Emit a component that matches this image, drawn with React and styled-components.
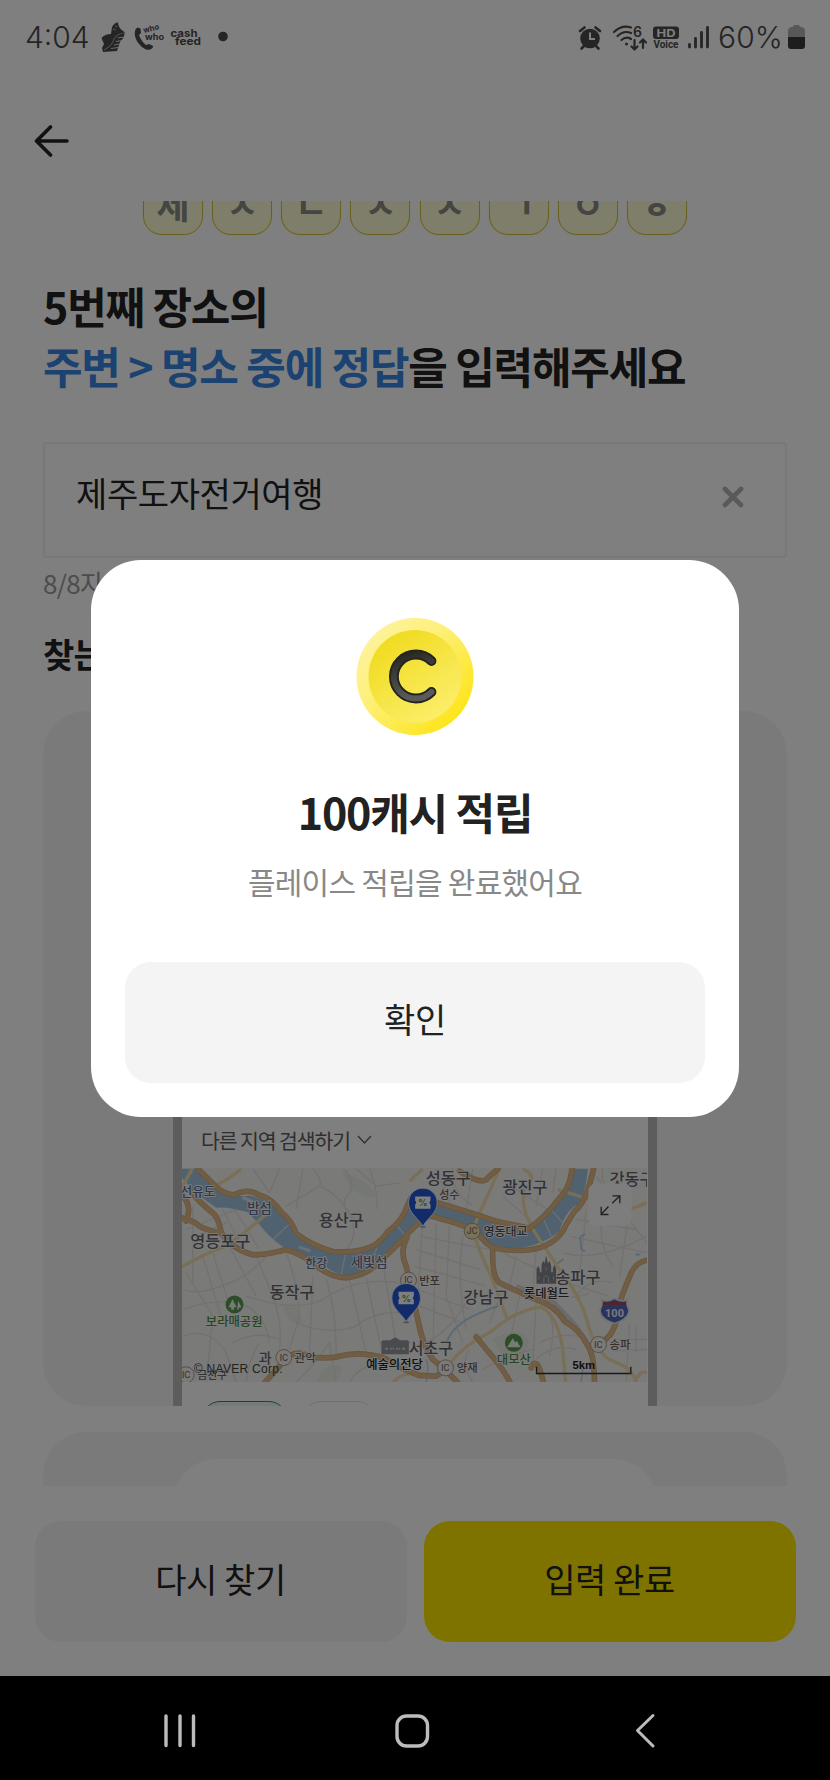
import React from "react";
import styled, { createGlobalStyle } from "styled-components";

const GlobalStyle = createGlobalStyle`
  * { box-sizing: border-box; }
  body { margin: 0; background: #000; }
  button { border: 0; margin: 0; padding: 0; font: inherit; color: inherit; }
`;

const Screen = styled.div`
  position: relative;
  display: flex;
  flex-direction: column;
  width: 830px;
  height: 1780px;
  overflow: hidden;
  background: #fff;
  color: #222;
  font-family: "Noto Sans CJK KR", sans-serif;
`;

/* ---------- status bar ---------- */

const StatusBar = styled.header`
  display: flex;
  justify-content: space-between;
  align-items: center;
  height: 73px;
  padding: 0 25px;
  color: #4a4a4a;
  font-family: Inter, sans-serif;
`;

const StatusGroup = styled.div`
  display: flex;
  align-items: center;
`;

const StatusText = styled.span`
  font-size: 30px;
  line-height: 36px;
  font-weight: 300;
  letter-spacing: ${(p) => p.$spacing || 0}px;
`;

const StatusIcon = styled.svg`
  display: block;
  width: ${(p) => p.$w}px;
  height: 34px;
  margin-left: ${(p) => p.$gap}px;
  overflow: visible;
`;

const TopBar = styled.div`
  display: flex;
  align-items: center;
  height: 128px;
  padding: 8px 0 0 34px;
  flex: none;

  svg { display: block; margin-bottom: 1px; }
`;

/* ---------- scrolled content ---------- */

const Content = styled.main`
  height: 1285px;
  flex: none;
  overflow: hidden;
  padding: 0 43px;
`;

const Hints = styled.div`
  display: flex;
  justify-content: center;
  gap: 9.1px;
  margin-top: -28px;
`;

const Hint = styled.span`
  width: 60px;
  height: 62px;
  border: 1.5px solid #d2be40;
  border-radius: 19px;
  background: #fffcd6;
  box-shadow: 0 0 2px #fff2a0;
  color: #8a8a86;
  font-size: 36px;
  font-weight: 700;
  line-height: 58px;
  text-align: center;
`;

const Question = styled.h1`
  margin: 40px 0 0;
  font-size: 43px;
  line-height: 60px;
  font-weight: 700;
  letter-spacing: -1.2px;
  white-space: nowrap;
`;

const Accent = styled.span`
  color: #3784e0;
`;

const AnswerField = styled.div`
  display: flex;
  align-items: center;
  justify-content: space-between;
  height: 116px;
  margin-top: 47px;
  padding: 0 41px 14px 31px;
  border: 2px solid #f0f0f0;
  border-radius: 4px;
  font-size: 34px;
  line-height: 50px;
  letter-spacing: -0.4px;

  svg { margin-top: 7px; }
`;

const Counter = styled.p`
  margin: 9px 0 0;
  font-size: 26px;
  line-height: 32px;
  letter-spacing: -0.7px;
  color: #999;
`;

const SectionTitle = styled.h2`
  margin: 31px 0 33px;
  font-size: 34px;
  line-height: 48px;
  letter-spacing: -0.8px;
`;

const GuideCard = styled.section`
  display: flex;
  justify-content: center;
  height: 695px;
  margin-bottom: 26px;
  padding-top: 27px;
  border-radius: 43px;
  background: #f5f5f5;
`;

const PhoneFrame = styled.div`
  display: flex;
  flex-direction: column;
  justify-content: flex-end;
  width: 484px;
  overflow: hidden;
  border: solid ${(p) => (p.$plain ? "#fff" : "#bababa")};
  border-width: 0 9.5px;
  border-radius: 44px 44px 0 0;
  background: #fff;
`;

const RegionRow = styled.div`
  display: flex;
  align-items: center;
  gap: 7px;
  height: 56px;
  padding: 0 0 0 19px;
  color: #5e5e5e;
  font-size: 20.5px;
  letter-spacing: -1.1px;
`;

const MapView = styled.svg`
  display: block;
  width: 465px;
  height: 214px;
  flex: none;
`;

const Pills = styled.div`
  display: flex;
  gap: 16px;
  height: 24px;
  padding: 19px 0 0 20px;
  overflow: hidden;
`;

const Pill = styled.span`
  flex: none;
  width: ${(p) => p.$w}px;
  height: 36px;
  border: 1.5px solid ${(p) => (p.$on ? "#2f8c50" : "#e2e2e2")};
  border-radius: 18px;
  background: ${(p) => (p.$on ? "#e9f8ee" : "#fff")};
`;

/* ---------- bottom actions and navigation ---------- */

const Actions = styled.footer`
  display: flex;
  gap: 17px;
  height: 190px;
  padding: 35px 34.5px;
  background: #fff;
`;

const ActionButton = styled.button`
  flex: 1;
  height: 120.5px;
  border-radius: 26px;
  background: ${(p) => (p.$primary ? "#ffe600" : "#f5f5f5")};
  font-size: 34px;
  line-height: 50px;
  letter-spacing: -0.4px;
  padding-bottom: 4px;
`;

const NavBar = styled.nav`
  display: flex;
  align-items: center;
  height: 104px;
  background: #000;

  svg { display: block; width: 830px; height: 104px; }
`;

/* ---------- reward dialog ---------- */

const Scrim = styled.div`
  position: absolute;
  inset: 0 0 104px;
  display: flex;
  align-items: center;
  justify-content: center;
  background: rgba(0, 0, 0, 0.5);
`;

const Dialog = styled.div`
  display: flex;
  flex-direction: column;
  align-items: center;
  width: 648px;
  height: 557px;
  padding: 54px 34px 34px;
  border-radius: 50px;
  background: #fff;
`;

const Coin = styled.svg`
  display: block;
  width: 124px;
  height: 124px;
  overflow: visible;
`;

const DialogTitle = styled.h3`
  margin: 43px 0 0;
  font-size: 43px;
  line-height: 60px;
  letter-spacing: -1.2px;
`;

const DialogText = styled.p`
  margin: 18px 0 0;
  font-size: 30px;
  line-height: 44px;
  letter-spacing: -0.75px;
  color: #888;
`;

const ConfirmButton = styled(ActionButton)`
  flex: none;
  width: 580px;
  height: 121px;
  margin-top: auto;
  padding-bottom: 6px;
  background: #f4f4f4;
`;

/* ---------- map pieces ---------- */

const HIGHWAYS = [
  "M85 178L140 232Q165 255 195 256Q235 236 265 255Q310 268 335 308Q365 330 380 372Q430 410 490 426Q560 432 610 410Q640 392 655 366Q700 335 715 285Q740 220 800 278L910 312L980 335L1080 356Q1130 320 1170 265Q1200 240 1208 178",
  "M60 240Q85 275 135 315Q150 335 155 370Q190 420 250 436Q300 435 350 420Q400 435 435 465Q480 503 530 505Q590 498 625 462L700 390Q740 340 780 318L850 338L918 362Q950 410 980 417Q1060 430 1110 415Q1170 395 1190 345L1215 305Q1250 280 1272 178",
  "M37 325Q75 335 90 350Q120 365 155 370",
  "M37 255Q70 290 50 335",
  "M970 415Q966 500 990 520Q1040 545 1100 570Q1160 590 1185 635Q1230 660 1250 700Q1275 730 1275 820",
  "M285 820L330 770Q370 710 420 742Q480 750 520 738Q580 725 650 748Q700 780 750 798L800 800Q860 760 830 770",
  "M712 385Q690 430 710 470Q725 540 745 630Q760 710 790 750Q830 780 865 820",
  "M920 682L955 725Q1000 775 1022 820",
  "M1085 775Q1090 755 1103 765Q1115 785 1122 820",
  "M1432 452Q1400 458 1385 490Q1355 560 1345 600Q1340 680 1290 700",
  "M870 185Q940 230 955 205L985 178",
];

const AVENUES = [
  "M37 472Q120 425 170 410Q240 360 300 305",
  "M145 225Q185 205 215 178",
  "M37 235L68 178",
  "M990 178L935 300L910 360Q925 420 965 500L1012 625",
  "M1060 178Q1110 200 1065 240Q1050 300 1100 375L1180 495Q1240 570 1260 660Q1290 740 1330 755Q1390 775 1400 820",
  "M835 768Q890 700 960 670Q1040 600 1115 592Q1165 620 1180 720L1188 820",
  "M1165 240L1260 270Q1300 300 1380 300L1432 280",
  "M720 215L760 178",
  "M670 820Q700 780 780 795",
  "M1395 820Q1410 780 1432 790",
];

const STREETS = [
  "M250 178Q280 220 300 250L330 178M400 178L380 300M430 178Q460 210 450 230L350 290M520 178Q560 210 540 250Q500 290 560 330",
  "M560 178L620 230L690 220M600 178Q630 260 620 300M450 230Q500 250 540 310Q570 380 530 420",
  "M70 290L70 520M100 440L160 640M40 540Q90 560 180 520Q240 500 300 430M130 430L190 620M180 410L260 560",
  "M40 600Q150 560 230 590Q290 620 300 700M50 490L130 620L110 818M160 300L220 420M190 290L270 420",
  "M260 440L310 560Q340 640 330 720M350 430Q380 500 390 620L360 720M430 500L420 740M470 510Q500 600 500 740",
  "M230 560Q380 610 460 570Q560 500 690 520M380 640Q480 680 560 650Q620 600 720 610M540 510Q560 600 590 730",
  "M590 505L640 740M640 460L680 700M190 700Q260 660 330 690M40 680Q120 650 170 730L200 818M230 818Q240 740 270 700",
  "M380 818Q440 760 480 700L500 818M540 818Q560 780 620 760M80 380L170 340M50 360L200 300",
  "M760 330L740 640M800 340L790 720M840 350L830 560L880 700M740 420L930 480M735 470L950 530M745 540L900 600M750 590L880 640M770 700Q850 660 900 560",
  "M750 380L960 420M880 380Q860 500 890 660M1000 540L960 640M1050 560L1020 700M1100 580L1090 760M1000 430L1150 500M1040 440L1020 530M1100 420L1090 550",
  "M800 178L850 300M850 178Q840 240 910 290M910 178L890 300M1010 220L1150 310M1000 260L1090 340M1120 178L1100 290M1160 178L1150 250",
  "M1280 200L1432 400M1300 300Q1280 400 1330 470M1220 330L1400 360M1200 380L1432 430M1250 300L1230 500M1380 300L1350 500M1180 430Q1280 460 1432 380",
  "M1110 700Q1180 660 1260 690M1100 750Q1150 700 1220 720M1190 520L1320 560M1220 560Q1260 500 1330 520M1340 690L1432 690M1330 725L1432 720M1380 640L1370 818M1400 650L1400 730",
  "M1130 540Q1200 580 1260 550M900 720Q870 760 910 818M940 780Q1000 740 1090 720M1140 620Q1160 650 1140 740M1300 178Q1290 230 1340 250",
];

const Label = ({ x, y, size = 46, fill = "#64646a", weight = 500, children, ...rest }) => (
  <text
    x={x}
    y={y}
    fontSize={size}
    fontWeight={weight}
    fill={fill}
    stroke="#fafafa"
    strokeWidth="5"
    strokeLinejoin="round"
    paintOrder="stroke"
    {...rest}
  >
    {children}
  </text>
);

const Junction = ({ x, y, name = "IC", fill = "#f6f4f1" }) => (
  <g>
    <circle cx={x} cy={y} r="24" fill={fill} stroke="#a99e92" strokeWidth="3" />
    <text x={x} y={y + 9} fontSize="25" fontWeight="500" textAnchor="middle" fill="#776c62" fontFamily="Inter">
      {name}
    </text>
  </g>
);

const Pin = ({ x, y }) => (
  <g transform={`translate(${x} ${y})`}>
    <ellipse cx="0" cy="72" rx="9" ry="3" fill="#9aa0ab" />
    <path
      d="M0-44C-25-44-43-25-43 0C-43 30-15 45 0 70C15 45 43 30 43 0C43-25 25-44 0-44Z"
      fill="#2358d2"
      stroke="#dfe8ff"
      strokeWidth="3"
    />
    <path d="M-23-19H23V-6Q17-1 23 5V18H-23V5Q-17-1-23-6Z" fill="#fff" />
    <text x="0" y="10" fontSize="28" fontWeight="700" textAnchor="middle" fill="#3d9f55" fontFamily="Inter">%</text>
  </g>
);

const SeoulMap = () => (
  <MapView viewBox="37.5 175.5 1395 642" preserveAspectRatio="none" fontFamily='"Noto Sans CJK KR", sans-serif'>
    <rect x="37" y="175" width="1396" height="643" fill="#f5f4f3" />
    <g fill="#e9eee5">
      <path d="M520 190Q600 210 620 260Q580 270 540 230Z" />
      <path d="M440 818Q470 750 520 775L500 818Z" />
      <path d="M340 590Q380 570 400 640Q370 660 340 590Z" />
      <path d="M970 690Q1060 640 1080 700Q1050 770 1000 740Z" />
    </g>
    <g fill="none" stroke="#e6e2e0" strokeWidth="4">
      {STREETS.map((d) => <path key={d} d={d} />)}
    </g>
    <path
      d="M37 178H90L140 240Q180 265 240 258Q300 270 345 320L380 380Q430 410 500 430Q580 432 630 400Q670 370 700 325L730 270Q760 255 800 280L910 315L980 345L1080 362Q1120 330 1160 280Q1200 230 1210 178H1255Q1250 250 1225 285Q1190 300 1170 365Q1130 400 1060 415Q1000 418 960 408L915 358L850 335L780 312Q735 330 690 390L620 465Q580 495 530 497Q490 495 450 455L340 412Q300 385 270 345L235 308Q170 290 140 295Q80 255 37 205Z"
      fill="#a0c4de"
    />
    <g fill="none" stroke="#d5e0e8" strokeWidth="4">
      <path d="M310 390L358 345M515 495L528 435M600 480L622 415M680 345L705 375M1140 295L1180 340M1118 320L1145 380" />
      <path d="M218 264L250 276M388 412L422 424" strokeWidth="9" />
    </g>
    <g fill="none" stroke="#b9d4ea" strokeWidth="6" strokeLinecap="round">
      <path d="M830 700Q850 650 910 620Q950 600 985 590M1245 375Q1225 380 1235 400Q1230 420 1245 425M1160 465L1180 450M1400 435L1410 435" />
      <path d="M770 750Q780 770 770 818M1240 780L1235 818" strokeWidth="4" />
    </g>
    <path d="M1040 530L1150 575L1220 650L1260 720" fill="none" stroke="#d5d8d8" strokeWidth="14" />
    <g fill="none" stroke="#f2dfae" strokeWidth="10">
      {AVENUES.map((d) => <path key={d} d={d} />)}
    </g>
    <g fill="none" stroke="#cfab7c" strokeWidth="17" strokeLinecap="round">
      {HIGHWAYS.map((d) => <path key={d} d={d} />)}
    </g>
    <g fill="none" stroke="#e0bb89" strokeWidth="12" strokeLinecap="round">
      {HIGHWAYS.map((d) => <path key={d} d={d} />)}
    </g>

    <Label x="33" y="259" size="38" fill="#5c6d94">선유도</Label>
    <Label x="233" y="309" size="40" fill="#5c6d94">밤섬</Label>
    <Label x="448" y="350" size="49">용산구</Label>
    <Label x="62" y="411" size="49">영등포구</Label>
    <Label x="407" y="476" size="36" fill="#5c6d94">한강</Label>
    <Label x="544" y="473" size="40" fill="#5c6d94">세빛섬</Label>
    <Label x="300" y="565" size="49">동작구</Label>
    <Label x="769" y="222" size="49">성동구</Label>
    <Label x="809" y="267" size="33" fill="#6d5f58">성수</Label>
    <Label x="999" y="251" size="49">광진구</Label>
    <Label x="1320" y="225" size="49">갓동구</Label>
    <Label x="882" y="580" size="49">강남구</Label>
    <Label x="1158" y="520" size="49">송파구</Label>
    <Label x="718" y="734" size="48">서초구</Label>
    <Label x="268" y="760" size="42">과</Label>
    <Label x="84" y="808" size="32">금천구</Label>

    <Junction x={343} y={744} />
    <Label x="375" y="757" size="35" fill="#6d5f58">관악</Label>
    <Junction x={50} y={796} />
    <Junction x={717} y={512} />
    <Label x="749" y="525" size="34" fill="#6d5f58">반포</Label>
    <Junction x={908} y={365} name="JC" fill="#f3e3ad" />
    <Label x="942" y="378" size="36" fill="#4f4f55">영동대교</Label>
    <Junction x={828} y={775} />
    <Label x="862" y="788" size="34" fill="#6d5f58">양재</Label>
    <Junction x={1287} y={705} />
    <Label x="1320" y="718" size="34" fill="#6d5f58">송파</Label>

    <circle cx="195" cy="585" r="27" fill="#5a9a50" />
    <path d="M189 569L201 593H193V601H185V593H177ZM206 574L216 594H208V600H203Z" fill="#eef5ec" />
    <Label x="109" y="649" size="37" fill="#4c8c44">보라매공원</Label>
    <circle cx="1033" cy="700" r="27" fill="#5a9a50" />
    <path d="M1013 713L1030 686L1037 699L1042 694L1053 713Z" fill="#eef5ec" />
    <Label x="982" y="763" size="37" fill="#4c8c44">대모산</Label>

    <path d="M636 734V700H718V734ZM632 700L640 692H662L677 683L692 692H714L722 700Z" fill="#94969a" />
    <path d="M646 718H657M662 718H673M680 718H691M696 718H708" stroke="#dcdde0" strokeWidth="6" />
    <path d="M646 728V712M657 728V712M668 728V712M686 728V712M697 728V712M708 728V712" stroke="#94969a" strokeWidth="3" />
    <path d="M1101 523V480L1106 468L1111 480V488H1116V466L1121 454L1125 462L1130 438L1135 462L1140 454L1145 468V488H1150V478L1155 466L1160 478V523Z" fill="#85878d" />
    <path d="M1123 520V504Q1130 494 1137 504V520M1108 500V510M1152 500V510M1130 474V484" fill="none" stroke="#bdbfc4" strokeWidth="3" />
    <Label x="590" y="779" size="37" fill="#222">예술의전당</Label>
    <Label x="1063" y="566" size="37" fill="#333">롯데월드</Label>

    <path d="M1297 570Q1310 580 1335 567Q1360 580 1373 570Q1370 586 1378 600Q1380 628 1335 642Q1290 628 1292 600Q1300 586 1297 570Z" fill="#5066bd" stroke="#dfe3f2" strokeWidth="5" />
    <path d="M1303 577Q1320 583 1335 574Q1350 583 1367 577L1368 586H1302Z" fill="#b8433f" />
    <text x="1335" y="623" fontSize="33" fontWeight="700" fill="#f2f4fa" textAnchor="middle" fontFamily="Roboto">100</text>

    <Pin x={760} y={280} />
    <Pin x={710} y={566} />

    <rect x="1257" y="222" width="129" height="127" rx="22" fill="#fbfbfb" />
    <path d="M1328 281L1350 260M1329 259H1351V281M1317 291L1295 314M1295 292V315H1317" fill="none" stroke="#444" strokeWidth="4" />

    <text x="73" y="790" fontSize="36" fill="#444" fontFamily="Liberation Sans" textLength="266">© NAVER Corp.</text>
    <text x="1243" y="779" fontSize="34" fontWeight="700" fill="#222" textAnchor="middle" fontFamily="Liberation Sans">5km</text>
    <path d="M1101 772V792H1384V772" fill="none" stroke="#333" strokeWidth="4" />
  </MapView>
);

const StatusIcons = () => (
  <StatusGroup>
    {/* alarm */}
    <StatusIcon $w={22} $gap={0} viewBox="0 0 22 34" fill="#4a4a4a">
      <circle cx="11" cy="18.5" r="9.8" />
      <path d="M5 26L2.5 28.5M17 26L19.5 28.5M1 11L5.5 7.5M21 11L16.5 7.5" stroke="#4a4a4a" strokeWidth="2.6" strokeLinecap="round" />
      <path d="M11 12.5V19H16" fill="none" stroke="#fff" strokeWidth="2" />
    </StatusIcon>
    {/* wifi 6 with traffic arrows */}
    <StatusIcon $w={34} $gap={12} viewBox="0 0 34 34" fill="none" stroke="#4a4a4a" strokeWidth="2.2" strokeLinecap="round">
      <path d="M1 12Q9 4.500 18 7.500M4.500 16Q11 10 18 13M8.500 20Q13 16 18 19" />
      <circle cx="13.500" cy="24" r="1.500" fill="#4a4a4a" stroke="none" />
      <path d="M21.500 20V29M18.500 26.500L21.500 29.500L24.500 26.500M30 28V20M27 22.500L30 19.500L33 22.500" strokeLinejoin="round" />
      <text x="20" y="16.500" fontSize="14" fontWeight="600" fill="#4a4a4a" stroke="none" fontFamily="Inter">6</text>
    </StatusIcon>
    {/* HD voice */}
    <StatusIcon $w={26} $gap={6} viewBox="0 0 26 34">
      <rect x="0" y="6.500" width="26" height="12.500" rx="3" fill="#4a4a4a" />
      <text x="13" y="16.700" fontSize="11" fontWeight="700" textAnchor="middle" fill="#fff" textLength="19" lengthAdjust="spacingAndGlyphs">HD</text>
      <text x="13" y="28" fontSize="10" fontWeight="700" textAnchor="middle" fill="#4a4a4a" textLength="25" fontFamily="Roboto">Voice</text>
    </StatusIcon>
    {/* signal */}
    <StatusIcon $w={21} $gap={9} viewBox="0 0 21 34" stroke="#4a4a4a" strokeWidth="2.800" strokeLinecap="round">
      <path d="M1.500 24.500V27M7.500 18.500V27M13.500 12.500V27M19.500 7.500V27" />
    </StatusIcon>
    <StatusText $spacing={0.1}>&nbsp;60%</StatusText>
    {/* battery */}
    <StatusIcon $w={17} $gap={5} viewBox="0 0 17 34">
      <path d="M5 7Q5 5 7 5H10Q12 5 12 7H14Q17 8 17 11V17H0V11Q0 8 3 7Z" fill="#b0b0b0" />
      <path d="M0 17H17V26Q17 29 14 29H3Q0 29 0 26Z" fill="#3a3a3a" />
    </StatusIcon>
  </StatusGroup>
);

const AppIcons = () => (
  <StatusGroup>
    <StatusText>4:04</StatusText>
    {/* running shoe */}
    <StatusIcon $w={24} $gap={11} viewBox="0 0 24 34">
      <path d="M11 7Q14 2 17 2.500Q17 8 23.500 12Q24 17 19 22L16 31L2 32L1 28L3 24L0.500 18Q4 14 10 14Z" fill="#4a4a4a" />
      <path d="M3 30Q12 25 13 19Q17 13 23.500 13" fill="none" stroke="#999" strokeWidth="1.200" />
      <path d="M10 28.500L17 27.500M13 25L18.500 24M15 21.500L21 20.500M17 18L22.500 17" stroke="#ddd" strokeWidth="1" />
      <path d="M12 9L15 10M14 6L16.500 7" stroke="#aaa" strokeWidth="1" />
    </StatusIcon>
    {/* caller id app */}
    <StatusIcon $w={31} $gap={9} viewBox="0 0 31 34">
      <path d="M3.500 7.500L6.500 8.500L7 13L5 15Q7 21 12 25L15 24L19 26Q19.500 28 16 29.500Q11 31 5 24Q-0.500 17 1 11Q1.500 8 3.500 7.500Z" fill="#4a4a4a" />
      <text x="10" y="13" fontSize="8" fontWeight="700" fill="#4a4a4a" transform="rotate(-14 10 13)" textLength="16" lengthAdjust="spacingAndGlyphs">who</text>
      <text x="11" y="19.500" fontSize="8.500" fontWeight="700" fill="#4a4a4a" textLength="19" lengthAdjust="spacingAndGlyphs">who</text>
    </StatusIcon>
    {/* cash feed */}
    <StatusIcon $w={31} $gap={5} viewBox="0 0 31 34" fontSize="10.500" fontWeight="700" fill="#4a4a4a">
      <text x="0.500" y="16.500" textLength="27" lengthAdjust="spacingAndGlyphs">cash</text>
      <text x="5" y="24.800" textLength="26" lengthAdjust="spacingAndGlyphs">feed</text>
    </StatusIcon>
    <StatusIcon $w={10} $gap={17} viewBox="0 0 10 34">
      <circle cx="5" cy="16.500" r="4.800" fill="#4a4a4a" />
    </StatusIcon>
  </StatusGroup>
);

const HINTS = ["제", "ㅈ", "ㄷ", "ㅈ", "ㅈ", "ㄱ", "ㅇ", "ㅎ"];

export default function App() {
  return (
    <Screen>
      <GlobalStyle />
      <StatusBar>
        <AppIcons />
        <StatusIcons />
      </StatusBar>
      <TopBar>
        <svg width="36" height="32" viewBox="0 0 36 32" fill="none" stroke="#222" strokeWidth="3.600" strokeLinecap="round" strokeLinejoin="round">
          <path d="M33 16H2.500M16.500 2L2.500 16L16.500 30" />
        </svg>
      </TopBar>

      <Content>
        <Hints>
          {HINTS.map((h, i) => <Hint key={i}>{h}</Hint>)}
        </Hints>
        <Question>
          5번째 장소의<br />
          <Accent>주변 &gt; 명소 중에 정답</Accent>을 입력해주세요
        </Question>
        <AnswerField>
          제주도자전거여행
          <svg width="22" height="22" viewBox="0 0 22 22" stroke="#b2b2b2" strokeWidth="4.600" strokeLinecap="round">
            <path d="M3 3L19 19M19 3L3 19" />
          </svg>
        </AnswerField>
        <Counter>8/8자</Counter>
        <SectionTitle>찾는 방법</SectionTitle>
        <GuideCard>
          <PhoneFrame>
            <RegionRow>
              다른 지역 검색하기
              <svg width="15" height="10" viewBox="0 0 15 10" fill="none" stroke="#666" strokeWidth="1.500">
                <path d="M1 1L7.500 8L14 1" />
              </svg>
            </RegionRow>
            <SeoulMap />
            <Pills>
              <Pill $w={85} $on />
              <Pill $w={72} />
            </Pills>
          </PhoneFrame>
        </GuideCard>
        <GuideCard>
          <PhoneFrame $plain />
        </GuideCard>
      </Content>

      <Actions>
        <ActionButton>다시 찾기</ActionButton>
        <ActionButton $primary>입력 완료</ActionButton>
      </Actions>

      <NavBar>
        <svg viewBox="0 0 830 104" fill="none" stroke="#bcbcbc" strokeWidth="3.400" strokeLinecap="round" strokeLinejoin="round">
          <path d="M166 40V69.500M180 40V69.500M193.500 40V69.500" />
          <rect x="397" y="40" width="30.500" height="30" rx="9.500" />
          <path d="M653 39.500L637.500 54.500L653 70" strokeWidth="3" />
        </svg>
      </NavBar>

      <Scrim>
        <Dialog>
          <Coin viewBox="0 0 124 124">
            <defs>
              <linearGradient id="rim" x1="0.1" y1="0.1" x2="0.85" y2="0.85">
                <stop offset="0" stopColor="#fdf3a0" />
                <stop offset="0.4" stopColor="#fdf07a" />
                <stop offset="1" stopColor="#fde51c" />
              </linearGradient>
              <linearGradient id="face" x1="0.2" y1="0.1" x2="0.8" y2="0.95">
                <stop offset="0" stopColor="#f0dc20" />
                <stop offset="1" stopColor="#fcee6c" />
              </linearGradient>
              <linearGradient id="letter" x1="0" y1="0" x2="0.3" y2="1">
                <stop offset="0" stopColor="#25251f" />
                <stop offset="1" stopColor="#5a5a5a" />
              </linearGradient>
            </defs>
            <circle cx="62" cy="62.500" r="58.500" fill="url(#rim)" />
            <circle cx="62" cy="62.500" r="46.500" fill="url(#face)" />
            <path d="M78.500 47A22 22 0 1 0 78.500 78" fill="none" stroke="#24241c" strokeWidth="9.800" strokeLinecap="round" />
            <path d="M78.500 47A22 22 0 1 0 78.500 78" fill="none" stroke="url(#letter)" strokeWidth="6" strokeLinecap="round" />
          </Coin>
          <DialogTitle>100캐시 적립</DialogTitle>
          <DialogText>플레이스 적립을 완료했어요</DialogText>
          <ConfirmButton>확인</ConfirmButton>
        </Dialog>
      </Scrim>
    </Screen>
  );
}
